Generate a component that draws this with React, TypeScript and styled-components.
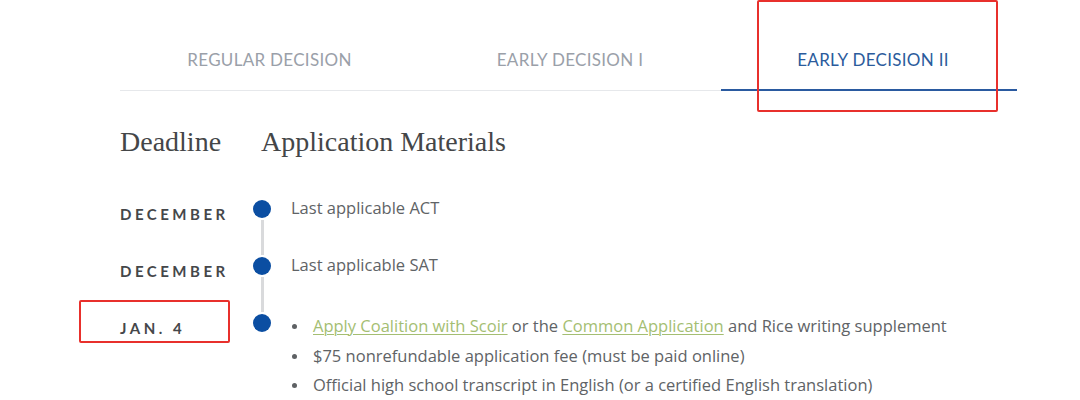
import React from 'react';
import styled, { createGlobalStyle } from 'styled-components';

const GlobalStyle = createGlobalStyle`
  html, body {
    margin: 0;
    padding: 0;
    background: #ffffff;
  }
  body {
    font-family: "Open Sans", Lato, sans-serif;
  }
`;

const Page = styled.div`
  position: relative;
  width: 1080px;
  height: 400px;
  overflow: hidden;
  background: #ffffff;
`;

const Container = styled.div`
  margin-left: 120px;
  width: 897px;
`;

const TabBar = styled.div`
  display: grid;
  grid-template-columns: 299px 302px 296px;
  border-bottom: 1px solid #e6e8eb;
`;

const Tab = styled.div<{ $active?: boolean }>`
  height: 91px;
  padding-top: 49px;
  box-sizing: border-box;
  text-align: center;
  font-family: Lato, sans-serif;
  font-size: 17px;
  letter-spacing: 0.3px;
  text-transform: uppercase;
  color: ${(p) => (p.$active ? '#2b5b9c' : '#9aa0a9')};
  border-bottom: 2px solid ${(p) => (p.$active ? '#2a5aa0' : 'transparent')};
  margin-bottom: -1px;
  padding-left: ${(p) => (p.$active ? '8px' : '0')};
`;

const Grid = styled.div`
  display: grid;
  grid-template-columns: 133px 18px 1fr;
`;

const Headings = styled(Grid)`
  margin-top: 34px;
  margin-bottom: 41px;
`;

const Heading = styled.h2<{ $wide?: boolean }>`
  margin: 0;
  font-family: "Liberation Serif", "DejaVu Serif", serif;
  font-weight: 400;
  font-size: 28px;
  line-height: 34px;
  color: #444648;
  grid-column: ${(p) => (p.$wide ? '2 / 4' : 'auto')};
  margin-left: ${(p) => (p.$wide ? '8px' : '0')};
`;

const Row = styled(Grid)``;

const DateLabel = styled.div`
  font-family: Lato, sans-serif;
  font-weight: 700;
  font-size: 15px;
  letter-spacing: 3.5px;
  color: #45474a;
  text-transform: uppercase;
  padding-top: 5px;
`;

const Marker = styled.div`
  display: flex;
  flex-direction: column;
  align-items: center;
`;

const Dot = styled.div`
  width: 18px;
  height: 18px;
  border-radius: 50%;
  background: #0b4ea2;
  flex-shrink: 0;
`;

const Connector = styled.div`
  width: 3px;
  height: 35px;
  margin: 2px 0;
  background: #d9dadc;
`;

const Text = styled.div`
  font-size: 16.5px;
  line-height: 20px;
  color: #606366;
  margin-top: -2px;
  padding-left: 20px;
`;

const List = styled.ul`
  margin: 0;
  padding: 0 0 0 20px;
  list-style: none;
  font-size: 16.5px;
  color: #606366;
  margin-top: -3px;
`;

const Item = styled.li`
  position: relative;
  padding-left: 22px;
  line-height: 29.5px;
  white-space: nowrap;

  &::before {
    content: '';
    position: absolute;
    left: 1px;
    top: 13px;
    width: 5px;
    height: 5px;
    border-radius: 50%;
    background: #5e6164;
  }
`;

const Link = styled.a`
  color: #a4be72;
  text-decoration: underline;
  text-underline-offset: 2px;
  text-decoration-thickness: 1px;
`;

const Annotation = styled.div<{ $x: number; $y: number; $w: number; $h: number }>`
  position: absolute;
  left: ${(p) => p.$x}px;
  top: ${(p) => p.$y}px;
  width: ${(p) => p.$w}px;
  height: ${(p) => p.$h}px;
  box-sizing: border-box;
  border: 2px solid #e8302c;
  border-radius: 2px;
  pointer-events: none;
`;

const timeline = [
  { date: 'December', text: 'Last applicable ACT' },
  { date: 'December', text: 'Last applicable SAT' },
];

export default function App() {
  return (
    <Page>
      <GlobalStyle />
      <Container>
        <TabBar>
          <Tab>Regular Decision</Tab>
          <Tab>Early Decision I</Tab>
          <Tab $active>Early Decision II</Tab>
        </TabBar>

        <Headings>
          <Heading>Deadline</Heading>
          <Heading $wide>Application Materials</Heading>
        </Headings>

        {timeline.map((row, i) => (
          <Row key={i}>
            <DateLabel>{row.date}</DateLabel>
            <Marker>
              <Dot />
              <Connector />
            </Marker>
            <Text>{row.text}</Text>
          </Row>
        ))}

        <Row>
          <DateLabel>Jan. 4</DateLabel>
          <Marker>
            <Dot />
          </Marker>
          <List>
            <Item>
              <Link href="#">Apply Coalition with Scoir</Link> or the{' '}
              <Link href="#">Common Application</Link> and Rice writing supplement
            </Item>
            <Item>$75 nonrefundable application fee (must be paid online)</Item>
            <Item>Official high school transcript in English (or a certified English translation)</Item>
          </List>
        </Row>
      </Container>

      <Annotation $x={757} $y={0} $w={241} $h={112} />
      <Annotation $x={79} $y={300} $w={151} $h={43} />
    </Page>
  );
}
